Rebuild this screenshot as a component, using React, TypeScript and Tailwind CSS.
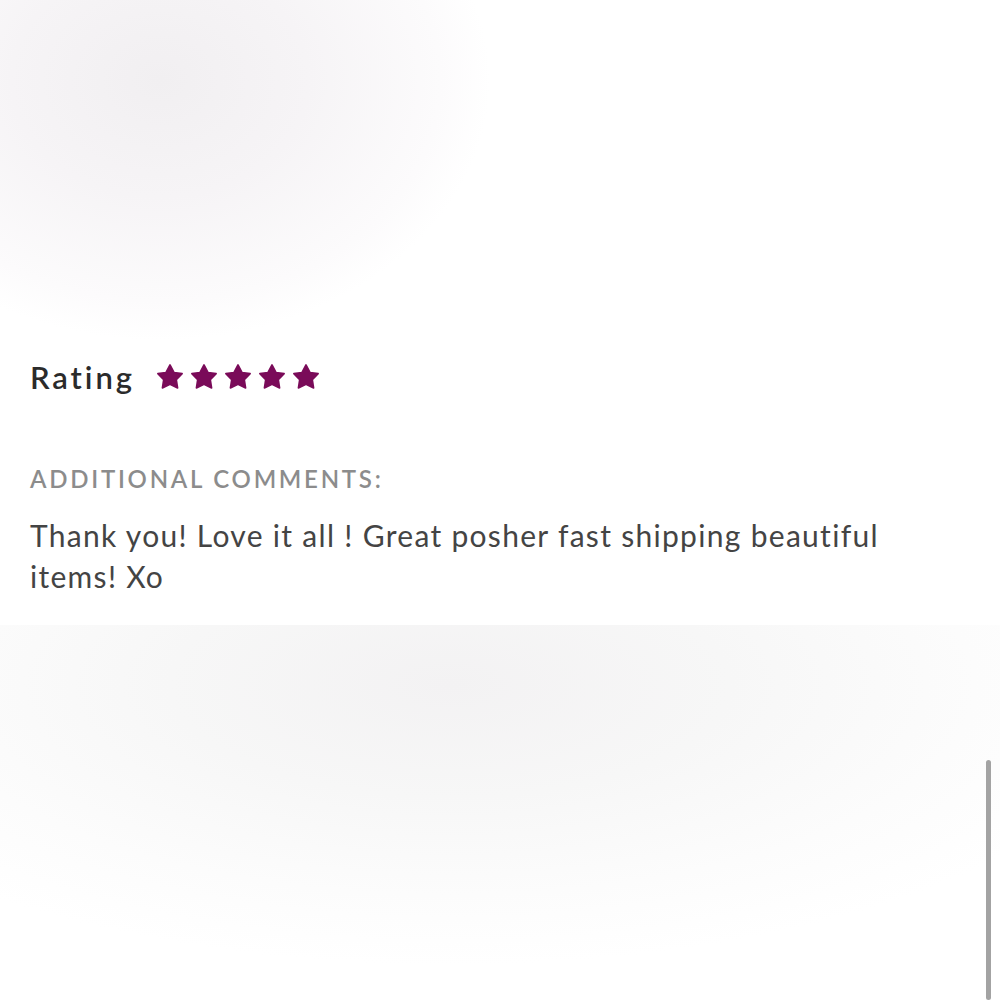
import React from "react";

function Star() {
	return (
		<svg viewBox="0 0 24 24" className="h-[28px] w-[28px]">
			<polygon
				points="12,1.6 15.4,8.1 22.4,9.1 17.4,14.3 18.5,21.4 12,18.2 5.5,21.4 6.6,14.3 1.6,9.1 8.6,8.1"
				fill="#7a0b59"
				stroke="#7a0b59"
				strokeWidth="1.4"
				strokeLinejoin="round"
			/>
		</svg>
	);
}

export default function App() {
	return (
		<div
			className="relative h-[1000px] w-[1000px] overflow-hidden bg-white"
			style={{ fontFamily: "Lato, 'Open Sans', sans-serif" }}
		>
			<div className="h-[352px] bg-[radial-gradient(ellipse_330px_260px_at_160px_80px,#f1eff1_0%,#f6f4f6_45%,#fcfbfc_85%,#ffffff_100%)]" />

			<div className="flex h-[273px] flex-col bg-white px-[30px]">
				<div className="mt-[7px] flex items-center gap-[21px]">
					<span className="text-[31px] font-semibold leading-[36px] tracking-[2.9px] text-[#2b2b2b]">
						Rating
					</span>
					<div className="flex gap-[6px]">
						<Star />
						<Star />
						<Star />
						<Star />
						<Star />
					</div>
				</div>
				<p className="mt-[69px] text-[24px] font-semibold leading-[30px] tracking-[2.75px] text-[#8c8c8c]">
					ADDITIONAL COMMENTS:
				</p>
				<p className="mt-[21px] max-w-[870px] text-[30px] leading-[41px] tracking-[1.3px] text-[#444444]">
					Thank you! Love it all ! Great posher fast shipping beautiful items! Xo
				</p>
			</div>

			<div className="h-[375px] bg-[radial-gradient(ellipse_700px_280px_at_450px_60px,#f3f2f3_0%,#f7f7f7_40%,#fcfcfc_75%,#ffffff_100%)]" />

			<div className="absolute right-[9px] top-[760px] h-[240px] w-[5px] rounded-full bg-[#a3a3a3]" />
		</div>
	);
}
